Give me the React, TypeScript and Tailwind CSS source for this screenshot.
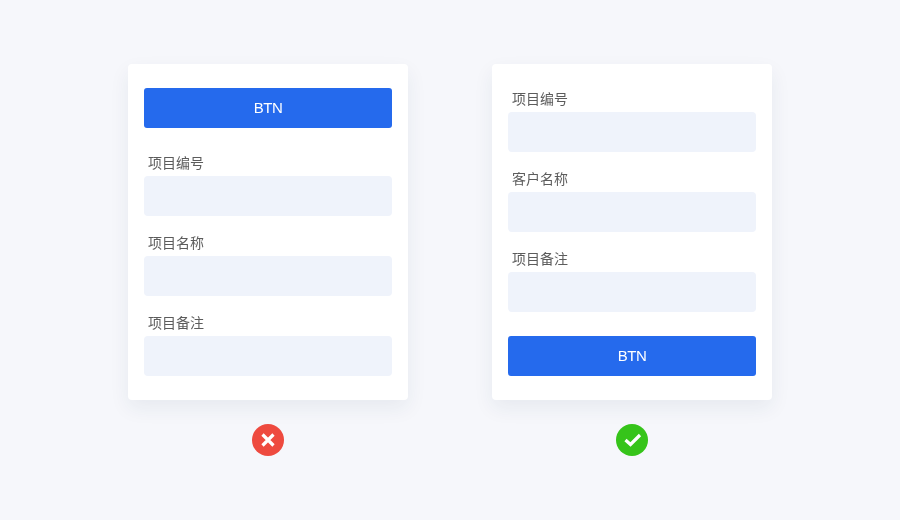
import React from 'react';

const fontStack = "font-['Liberation_Sans','Noto_Sans_CJK_SC',sans-serif]";

const Field: React.FC<{ label: string; className?: string }> = ({ label, className = '' }) => (
  <div className={className}>
    <div className="h-6 pl-1 text-sm leading-[22px] text-[#5c5c5c] will-change-transform">{label}</div>
    <div className="h-10 rounded bg-[#eff3fb]" />
  </div>
);

const Btn: React.FC<{ className?: string }> = ({ className = '' }) => (
  <button className={`block h-10 w-full rounded-[3px] bg-[#256aed] text-[15px] tracking-[-0.5px] text-white ${className}`}>
    <span className="block will-change-transform">BTN</span>
  </button>
);

const App: React.FC = () => {
  return (
    <div className={`flex h-[520px] w-[900px] items-center justify-center gap-[84px] bg-[#f6f7fb] ${fontStack}`}>
      <div className="flex flex-col items-center gap-6">
        <div className="h-[336px] w-[280px] rounded bg-white px-4 py-6 shadow-[0_8px_20px_rgba(30,50,90,0.07)]">
          <Btn />
          <Field label="项目编号" className="mt-6" />
          <Field label="项目名称" className="mt-4" />
          <Field label="项目备注" className="mt-4" />
        </div>
        <svg width="32" height="32" viewBox="0 0 32 32">
          <circle cx="16" cy="16" r="16" fill="#ee4a3f" />
          <path d="M10.5 10.5 21.5 21.5M21.5 10.5 10.5 21.5" stroke="#fff" strokeWidth="3.2" fill="none" />
        </svg>
      </div>
      <div className="flex flex-col items-center gap-6">
        <div className="h-[336px] w-[280px] rounded bg-white px-4 py-6 shadow-[0_8px_20px_rgba(30,50,90,0.07)]">
          <Field label="项目编号" />
          <Field label="客户名称" className="mt-4" />
          <Field label="项目备注" className="mt-4" />
          <Btn className="mt-6" />
        </div>
        <svg width="32" height="32" viewBox="0 0 32 32">
          <circle cx="16" cy="16" r="16" fill="#36c41a" />
          <path d="M9.5 16 14.5 20.5 24 11" stroke="#fff" strokeWidth="3.2" fill="none" />
        </svg>
      </div>
    </div>
  );
};

export default App;
